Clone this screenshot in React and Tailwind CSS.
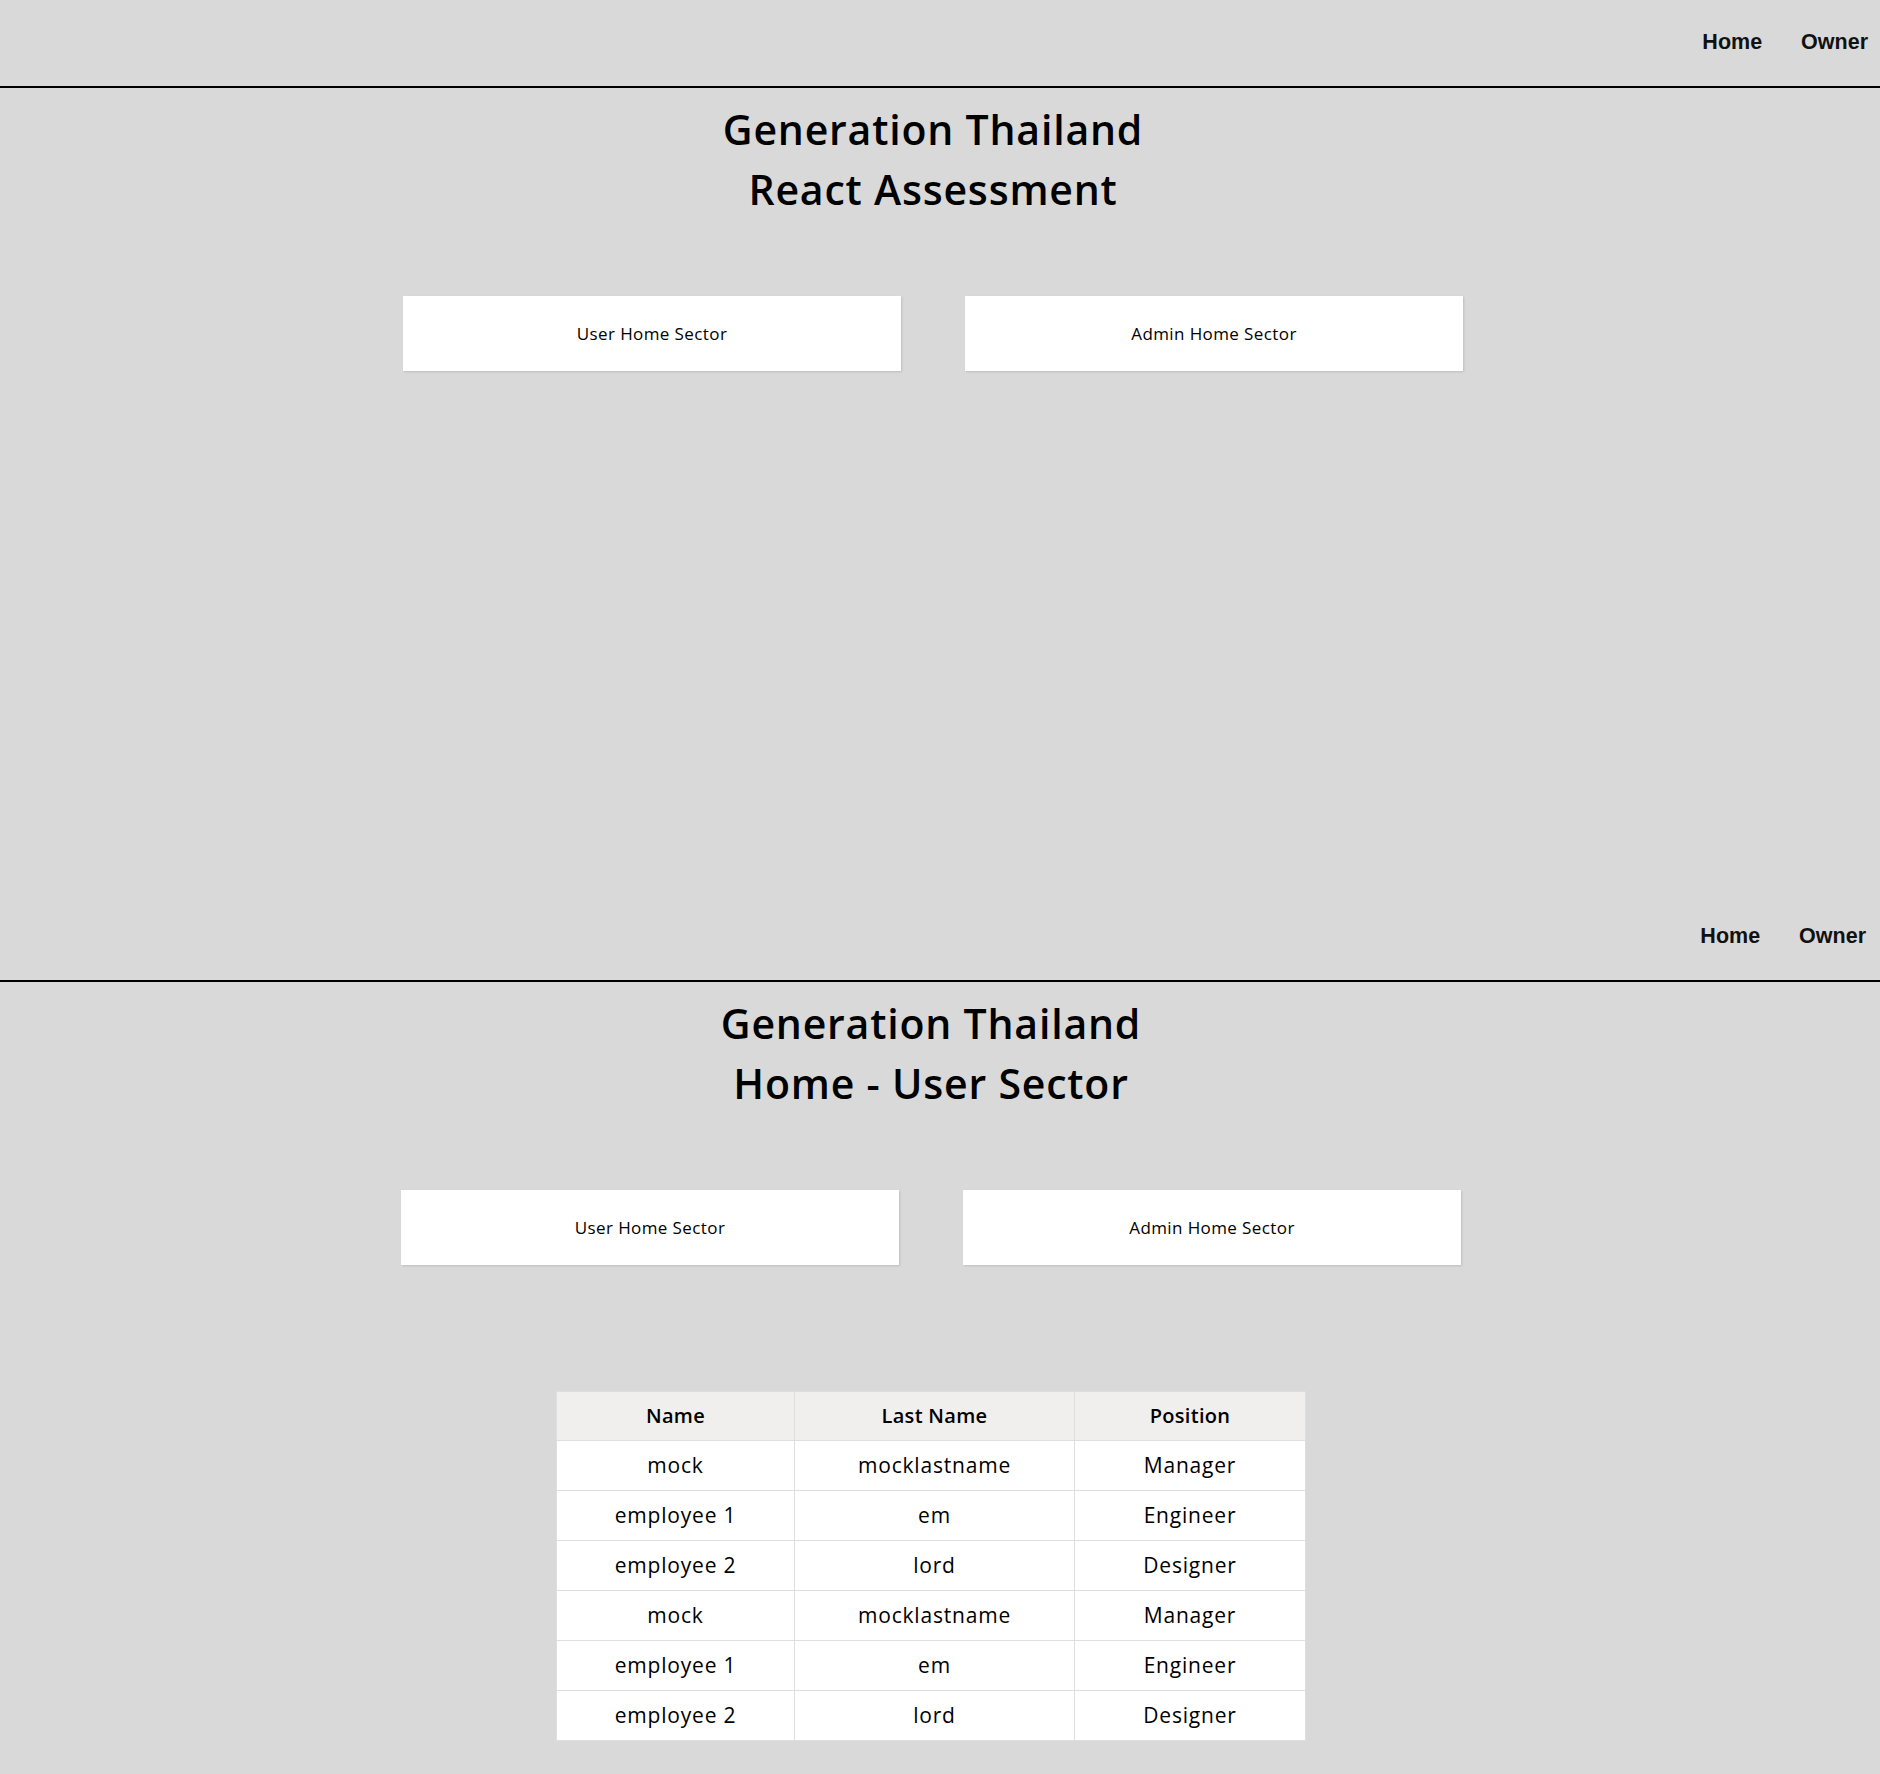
const employees = [
  { name: 'mock', lastname: 'mocklastname', position: 'Manager' },
  { name: 'employee 1', lastname: 'em', position: 'Engineer' },
  { name: 'employee 2', lastname: 'lord', position: 'Designer' },
  { name: 'mock', lastname: 'mocklastname', position: 'Manager' },
  { name: 'employee 1', lastname: 'em', position: 'Engineer' },
  { name: 'employee 2', lastname: 'lord', position: 'Designer' },
];

const bodyFont = { fontFamily: '"Open Sans", "Noto Sans", sans-serif' };

function Navbar({ right }) {
  return (
    <nav className={`h-[88px] border-b-2 border-black flex items-center justify-end ${right}`}>
      <ul className="flex gap-[39px] text-[21.5px] font-bold text-[#111] font-['Liberation_Sans',Arial,sans-serif] -mt-[1px]">
        <li>Home</li>
        <li>Owner</li>
      </ul>
    </nav>
  );
}

function SectorButtons() {
  return (
    <div className="flex justify-center gap-[64px] mt-[76px]">
      <button className="w-[498px] h-[75px] bg-white text-[17px] tracking-[0.4px] text-black shadow-[1px_1px_2px_rgba(0,0,0,0.12)]">
        User Home Sector
      </button>
      <button className="w-[498px] h-[75px] bg-white text-[17px] tracking-[0.4px] text-black shadow-[1px_1px_2px_rgba(0,0,0,0.12)]">
        Admin Home Sector
      </button>
    </div>
  );
}

function Title({ second }) {
  return (
    <h1 className="pt-[11px] pb-[1px] text-center text-[41px] leading-[60px] tracking-[0.8px] font-semibold text-black">
      Generation Thailand
      <br />
      {second}
    </h1>
  );
}

function EmployeeTable() {
  return (
    <div className="flex justify-center mt-[126px]">
      <table className="border-collapse text-[21px] tracking-[0.8px] text-black">
        <thead>
          <tr className="bg-[#f1eeee] h-[49px] text-[20px] tracking-[0.3px]">
            <th className="w-[238px] border border-[#dedede] font-semibold">Name</th>
            <th className="w-[280px] border border-[#dedede] font-semibold">Last Name</th>
            <th className="w-[231px] border border-[#dedede] font-semibold">Position</th>
          </tr>
        </thead>
        <tbody>
          {employees.map((emp, i) => (
            <tr key={i} className="bg-white h-[50px]">
              <td className="border border-[#dedede] text-center">{emp.name}</td>
              <td className="border border-[#dedede] text-center">{emp.lastname}</td>
              <td className="border border-[#dedede] text-center">{emp.position}</td>
            </tr>
          ))}
        </tbody>
      </table>
    </div>
  );
}

export default function App() {
  return (
    <div className="bg-[#d9d9d9] min-h-[1774px] w-full" style={bodyFont}>
      {/* landing */}
      <section className="h-[894px]">
        <Navbar right="pr-[12px]" />
        <div className="mr-[14px]">
          <Title second="React Assessment" />
          <SectorButtons />
        </div>
      </section>

      {/* user sector */}
      <section className="pb-[34px]">
        <Navbar right="pr-[14px]" />
        <div className="mr-[18px]">
          <Title second="Home - User Sector" />
          <SectorButtons />
          <EmployeeTable />
        </div>
      </section>
    </div>
  );
}
